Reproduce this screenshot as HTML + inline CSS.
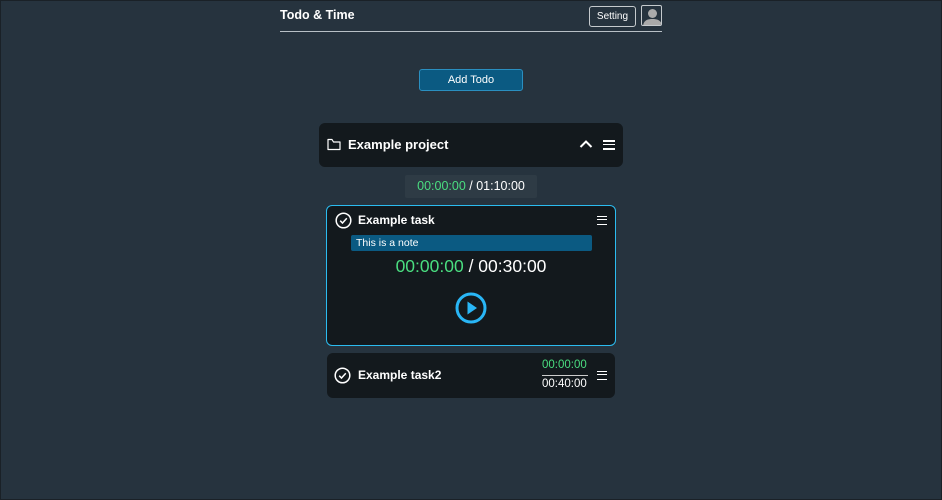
<!DOCTYPE html>
<html><head><meta charset="utf-8"><style>
*{box-sizing:border-box;margin:0;padding:0}
body{width:942px;height:500px;background:#26333e;font-family:"Liberation Sans",sans-serif;color:#fff;position:relative;overflow:hidden}
.a{position:absolute}
.g{color:#4ade80}
.card{background:#13191d;border-radius:6px}
.menu{width:12px;height:10px;border-top:2px solid #fff;border-bottom:2px solid #fff;position:absolute}
.menu:after{content:"";position:absolute;left:0;right:0;top:2px;border-top:1.5px solid #fff}
</style></head><body>
<div class="a" style="left:0;top:0;width:942px;height:500px;border:1px solid #1a2127"></div>
<div class="a" style="left:280px;top:8px;font-size:12.5px;font-weight:bold">Todo &amp; Time</div>
<div class="a" style="left:280px;top:31px;width:382px;height:1px;background:#b8c0c6"></div>
<div class="a" style="left:589px;top:6px;width:47px;height:21px;border:1px solid #c5cacd;border-radius:3px;font-size:10px;text-align:center;line-height:19px">Setting</div>
<div class="a" style="left:641px;top:5px;width:21px;height:21px;border:1px solid #c5cacd;border-radius:2px;overflow:hidden;background:#26333e">
<svg width="21" height="21" viewBox="0 0 21 21"><circle cx="10.5" cy="7.5" r="4.5" fill="#aaa"/><path d="M1 21 C1 14 6 13 10.5 13 C15 13 20 14 20 21Z" fill="#aaa"/></svg></div>
<div class="a" style="left:419px;top:69px;width:104px;height:22px;background:#0b5a82;border:1px solid #2a8fc0;border-radius:3px;font-size:11px;text-align:center;line-height:20px">Add Todo</div>

<div class="a card" style="left:319px;top:123px;width:304px;height:44px">
<svg class="a" style="left:8px;top:15px" width="14" height="13" viewBox="0 0 14 13"><path d="M1 2.5 V11.5 H13 V4 H6.5 L5 1.5 H1Z" fill="none" stroke="#fff" stroke-width="1.2" stroke-linejoin="round"/></svg>
<div class="a" style="left:29px;top:14px;font-size:13px;font-weight:bold">Example project</div>
<svg class="a" style="left:260px;top:16px" width="14" height="10" viewBox="0 0 14 10"><path d="M1.5 8 L7 2.5 L12.5 8" fill="none" stroke="#fff" stroke-width="2"/></svg>
<div class="menu" style="left:284px;top:17px"></div>
</div>

<div class="a" style="left:405px;top:175px;width:132px;height:23px;background:#2e3b45;border-radius:2px;font-size:12.5px;text-align:center;line-height:23px"><span class="g">00:00:00</span> / 01:10:00</div>

<div class="a card" style="left:326px;top:205px;width:290px;height:141px;border:1px solid #2bbcf0">
<svg class="a" style="left:8px;top:6px" width="17" height="17" viewBox="0 0 17 17"><circle cx="8.5" cy="8.5" r="7.3" fill="none" stroke="#fff" stroke-width="1.5"/><path d="M5.2 8.7 L7.5 11 L11.8 6.3" fill="none" stroke="#fff" stroke-width="1.5"/></svg>
<div class="a" style="left:31px;top:7px;font-size:12px;font-weight:bold">Example task</div>
<div class="menu" style="left:270px;top:10px;width:10px;height:9px;border-width:1.5px"></div>
<div class="a" style="left:24px;top:29px;width:241px;height:16px;background:#0b5a82;border-radius:2px;font-size:10.5px;line-height:16px;padding-left:5px">This is a note</div>
<div class="a" style="left:0;width:288px;top:50px;font-size:17.5px;text-align:center"><span class="g">00:00:00</span> / 00:30:00</div>
<svg class="a" style="left:128px;top:86px" width="32" height="32" viewBox="0 0 32 32"><circle cx="16" cy="16" r="14" fill="none" stroke="#29b6f6" stroke-width="3"/><path d="M12.5 9.5 L22 16 L12.5 22.5Z" fill="#29b6f6"/></svg>
</div>

<div class="a card" style="left:327px;top:353px;width:288px;height:45px">
<svg class="a" style="left:7px;top:14px" width="17" height="17" viewBox="0 0 17 17"><circle cx="8.5" cy="8.5" r="7.3" fill="none" stroke="#fff" stroke-width="1.5"/><path d="M5.2 8.7 L7.5 11 L11.8 6.3" fill="none" stroke="#fff" stroke-width="1.5"/></svg>
<div class="a" style="left:31px;top:15px;font-size:12px;font-weight:bold">Example task2</div>
<div class="a g" style="left:215px;top:6px;font-size:11.5px">00:00:00</div>
<div class="a" style="left:215px;top:22px;width:46px;height:1px;background:#ccc"></div>
<div class="a" style="left:215px;top:25px;font-size:11.5px">00:40:00</div>
<div class="menu" style="left:270px;top:18px;width:10px;height:9px;border-width:1.5px"></div>
</div>
</body></html>
